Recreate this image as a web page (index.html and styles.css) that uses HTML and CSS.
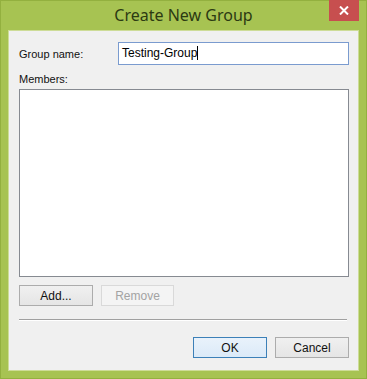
FILE: index.html
```html
<!DOCTYPE html>
<html>
<head lang="en">
    <meta charset="UTF-8">
    <title>Create New Group</title>
    <link rel="stylesheet" href="styles.css">
</head>
<body>
<div class="window">
    <div class="titlebar">
        <div class="title">Create New Group</div>
        <div class="close">
            <svg width="10" height="9" viewBox="0 0 10 9">
                <path d="M1 0.5 L9 8.5 M9 0.5 L1 8.5" stroke="#fff" stroke-width="2"/>
            </svg>
        </div>
    </div>
    <div class="content">
        <div class="row name-row">
            <label class="label">Group name:</label>
            <div class="input">Testing-Group<span class="caret"></span></div>
        </div>
        <div class="label members">Members:</div>
        <div class="list"></div>
        <div class="row list-buttons">
            <button class="btn">Add...</button>
            <button class="btn disabled">Remove</button>
        </div>
        <div class="separator"></div>
        <div class="row footer">
            <button class="btn default">OK</button>
            <button class="btn">Cancel</button>
        </div>
    </div>
</div>
</body>
</html>
```

FILE: styles.css
```css
* {
    padding: 0;
    margin: 0;
    box-sizing: border-box;
}
body {
    font-family: "Liberation Sans", Arial, sans-serif;
    font-size: 11px;
    color: #111;
    background: #fff;
}
.window {
    width: 367px;
    height: 379px;
    background-color: #a7c352;
    border: 1px solid #93b03f;
    display: flex;
    flex-direction: column;
}
.titlebar {
    height: 29px;
    position: relative;
    display: flex;
    justify-content: center;
    align-items: center;
}
.title {
    font-family: "Noto Sans", "Open Sans", sans-serif;
    font-size: 16px;
    color: #2c3a12;
    margin-top: -1px;
}
.close {
    position: absolute;
    top: -1px;
    right: 7px;
    width: 30px;
    height: 21px;
    background-color: #c74f4f;
    display: flex;
    justify-content: center;
    align-items: center;
}
.content {
    flex: 1;
    margin: 0 7px 7px 7px;
    background-color: #f0f0f0;
    border: 1px solid #cddc97;
    padding: 11px 9px 0 10px;
    display: flex;
    flex-direction: column;
}
.row {
    display: flex;
    align-items: center;
}
.name-row {
    height: 23px;
}
.name-row .label {
    width: 99px;
}
.input {
    flex: 1;
    height: 23px;
    background: #fff;
    border: 1px solid #7a9bcf;
    padding: 0 3px;
    line-height: 20px;
    font-size: 12px;
    color: #000;
}
.caret {
    display: inline-block;
    width: 1px;
    height: 14px;
    background: #000;
    vertical-align: -3px;
}
.members {
    margin-top: 8px;
    height: 15px;
}
.list {
    margin-top: 1px;
    height: 188px;
    background: #fff;
    border: 1px solid #868a91;
}
.btn {
    font-family: "Liberation Sans", Arial, sans-serif;
    font-size: 12px;
    color: #111;
    height: 21px;
    width: 74px;
    background: linear-gradient(#f0f0f0, #e5e5e5);
    border: 1px solid #acacac;
}
.list-buttons {
    margin-top: 8px;
    gap: 8px;
}
.btn.disabled {
    color: #a3a3a3;
    background: #f4f4f4;
    border-color: #d9d9d9;
    width: 73px;
}
.separator {
    margin-top: 13px;
    margin-right: 2px;
    height: 2px;
    border-top: 1px solid #a0a0a0;
    border-bottom: 1px solid #fff;
}
.footer {
    margin-top: 16px;
    justify-content: flex-end;
    gap: 8px;
}
.btn.default {
    background: linear-gradient(#e9f2fb, #dbeaf8);
    border-color: #3c80b8;
}
```
